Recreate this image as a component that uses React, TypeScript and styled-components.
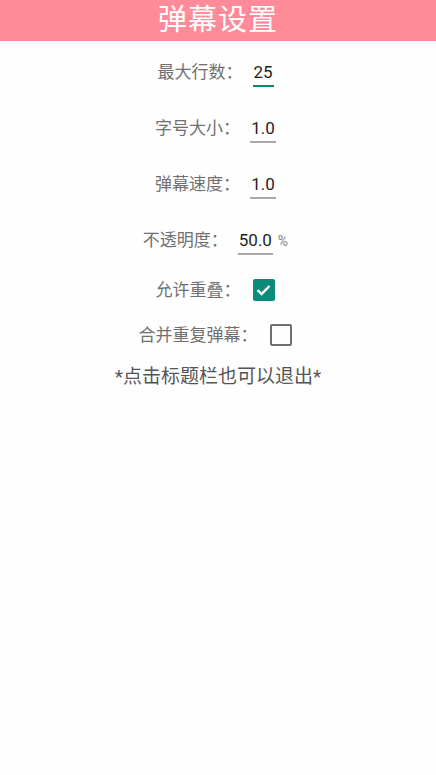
import React, { useState } from 'react';
import styled, { createGlobalStyle, css } from 'styled-components';

const GlobalStyle = createGlobalStyle`
  html, body {
    margin: 0;
    padding: 0;
    background: #fefefe;
  }
  body {
    font-family: Roboto, "Noto Sans CJK SC", sans-serif;
  }
`;

type FieldType = {
  label: string;
  value: string;
  width: number;
  suffix?: string;
};

const fields: Array<FieldType> = [
  { label: '最大行数：', value: '25', width: 21 },
  { label: '字号大小：', value: '1.0', width: 26 },
  { label: '弹幕速度：', value: '1.0', width: 26 },
  { label: '不透明度：', value: '50.0', width: 35, suffix: '%' },
];

const Check = () => (
  <svg width="15" height="12" viewBox="0 0 15 12">
    <path d="M1.5 6.2 L5.6 10 L13.5 2" fill="none" stroke="#fff" strokeWidth="2.4" />
  </svg>
);

export default function App() {
  const [overlap, setOverlap] = useState(true);
  const [merge, setMerge] = useState(false);

  return (
    <>
      <GlobalStyle />
      <Page>
        <Header>弹幕设置</Header>
        <Content>
          {fields.map((field, i) => (
            <FieldRow key={field.label}>
              <Label>{field.label}</Label>
              <Input focused={i === 0} style={{ width: field.width }}>
                {field.value}
              </Input>
              {field.suffix && <Suffix>{field.suffix}</Suffix>}
            </FieldRow>
          ))}
          <CheckRow>
            <Label>允许重叠：</Label>
            <CheckBox checked={overlap} onClick={() => setOverlap(!overlap)}>
              {overlap && <Check />}
            </CheckBox>
          </CheckRow>
          <CheckRow second>
            <Label>合并重复弹幕：</Label>
            <CheckBox checked={merge} onClick={() => setMerge(!merge)}>
              {merge && <Check />}
            </CheckBox>
          </CheckRow>
          <Note>*点击标题栏也可以退出*</Note>
        </Content>
      </Page>
    </>
  );
}

const Page = styled('div')`
  display: flex;
  flex-direction: column;
  min-height: 775px;
  background: #fefefe;
`;

const Header = styled('div')`
  height: 41px;
  background: #ff8a98;
  color: #ffffff;
  font-size: 29px;
  line-height: 41px;
  text-align: center;
  letter-spacing: 1px;
`;

const Content = styled('div')`
  display: flex;
  flex-direction: column;
  align-items: center;
  padding-top: 7px;
`;

const FieldRow = styled('div')`
  display: flex;
  align-items: center;
  justify-content: center;
  height: 48px;
  margin-bottom: 8px;
  padding-right: 5px;
`;

const Label = styled('span')`
  font-size: 17px;
  line-height: 22px;
  color: #707070;
  margin-right: 10px;
`;

const Input = styled('div')<{ focused: boolean }>`
  ${({ focused }) => css`
    box-sizing: border-box;
    height: 30px;
    padding-top: 4px;
    font-size: 17px;
    line-height: 22px;
    color: #1e1e1e;
    text-align: center;
    border-bottom: ${focused ? '2px solid #00897b' : '2px solid #a8a8a8'};
  `}
`;

const Suffix = styled('span')`
  font-size: 14px;
  line-height: 22px;
  color: #808080;
  margin-left: 5px;
  margin-top: 1px;
`;

const CheckRow = styled('div')<{ second?: boolean }>`
  display: flex;
  align-items: center;
  justify-content: center;
  height: 40px;
  padding-right: 6px;
  margin-top: ${({ second }) => (second ? '5px' : '-2px')};
`;

const CheckBox = styled('div')<{ checked: boolean }>`
  ${({ checked }) => css`
    box-sizing: border-box;
    width: 22px;
    height: 22px;
    border-radius: 2px;
    display: flex;
    align-items: center;
    justify-content: center;
    cursor: pointer;
    margin-left: 2px;
    background: ${checked ? '#0c8a7b' : 'transparent'};
    border: ${checked ? 'none' : '2px solid #6e6e6e'};
  `}
`;

const Note = styled('div')`
  margin-top: 10px;
  font-size: 19px;
  line-height: 24px;
  color: #555555;
`;
